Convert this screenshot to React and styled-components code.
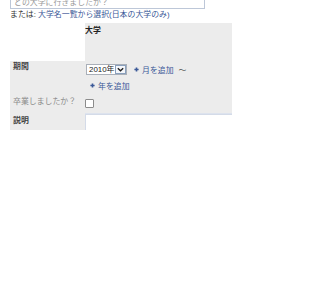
import React from 'react';
import styled, { createGlobalStyle } from 'styled-components';

const GlobalStyle = createGlobalStyle`
  html, body { margin:0; padding:0; background:#fff; }
  body {
    font-family:"Liberation Sans","Noto Sans CJK JP",sans-serif;
    font-size:7.9px;
    color:#333;
  }
`;

const Page = styled.div`
  padding-left:10px;
  width:222px;
`;

const SearchBox = styled.div`
  box-sizing:border-box;
  width:195px;
  height:19px;
  margin-top:-10px;
  border:1px solid #bdc7d8;
  padding:0 3px 1px;
  display:flex;
  align-items:flex-end;
  color:#999;
  line-height:9px;
`;

const Hint = styled.div`
  margin-top:1px;
  line-height:10px;
  white-space:nowrap;
`;

const Link = styled.a`
  color:#3b5998;
  text-decoration:none;
  cursor:pointer;
`;

const Form = styled.div`
  margin-top:3px;
  display:grid;
  grid-template-columns:75px 147px;
`;

const Label = styled.div`
  background:${p => (p.$blank ? '#fff' : '#ececec')};
  padding:${p => p.$top || 2}px 0 0 3px;
  line-height:10px;
  font-weight:${p => (p.$light ? 'normal' : 'bold')};
  color:${p => (p.$light ? '#8a8a8a' : '#444')};
  white-space:nowrap;
`;

const Field = styled.div`
  background:#ececec;
  box-sizing:border-box;
  height:${p => p.$h}px;
  padding:${p => p.$pad || '0'};
  border-bottom:${p => (p.$line ? '1px solid #dde3ee' : 'none')};
`;

const Heading = styled.div`
  font-weight:bold;
  color:#222;
  line-height:10px;
`;

const Line = styled.div`
  display:flex;
  align-items:center;
  height:${p => p.$h || 10}px;
  padding-left:${p => p.$indent || 0}px;
  margin-top:${p => p.$mt || 0}px;
`;

const Select = styled.div`
  box-sizing:border-box;
  width:41px;
  height:11px;
  border:1px solid #a9afb8;
  background:#fff;
  display:flex;
  align-items:center;
  justify-content:space-between;
  padding-left:2px;
  color:#222;
  line-height:9px;
`;

const Drop = styled.span`
  box-sizing:border-box;
  width:11px;
  height:9px;
  border:1px solid #8aa0bd;
  background:#f4f6fa;
  display:flex;
  align-items:center;
  justify-content:center;
`;

const AddLink = styled(Link)`
  display:inline-flex;
  align-items:center;
  gap:3px;
  white-space:nowrap;
  margin-left:${p => p.$ml || 0}px;
`;

const Tilde = styled.span`
  color:#555;
  margin-left:5px;
`;

const Check = styled.span`
  display:block;
  box-sizing:border-box;
  width:9px;
  height:9px;
  border:1px solid #8c8c8c;
  border-radius:1px;
  background:#fff;
`;

const TextBox = styled.div`
  height:16px;
  border-top:1px solid #d4dbe8;
  border-left:1px solid #d4dbe8;
  background:#fff;
  box-sizing:border-box;
`;

const DescLabel = styled(Label)`
  height:16px;
  box-sizing:border-box;
`;

function Plus() {
  return (
    <svg width="5" height="5" viewBox="0 0 5 5">
      <path d="M2.5 0.4V4.6M0.4 2.5H4.6" stroke="#3b5998" strokeWidth="1.6" />
    </svg>
  );
}

export default function App() {
  return (
    <Page>
      <GlobalStyle />
      <SearchBox>どの大学に行きましたか？</SearchBox>
      <Hint>
        または: <Link>大学名一覧から選択(日本の大学のみ)</Link>
      </Hint>
      <Form>
        <Label $blank />
        <Field $h={38} $pad="3px 0 0 0">
          <Heading>大学</Heading>
        </Field>

        <Label $top={1}>期間</Label>
        <Field $h={33} $pad="3px 0 0 1px">
          <Line $h={11}>
            <Select>
              2010年
              <Drop>
                <svg width="7" height="5" viewBox="0 0 7 5">
                  <path d="M0.8 1.2L3.5 3.8L6.2 1.2" stroke="#1a1a1a" strokeWidth="1.3" fill="none" />
                </svg>
              </Drop>
            </Select>
            <AddLink $ml={7}>
              <Plus />月を追加
            </AddLink>
            <Tilde>〜</Tilde>
          </Line>
          <Line $indent={4} $mt={5}>
            <AddLink>
              <Plus />年を追加
            </AddLink>
          </Line>
        </Field>

        <Label $top={3} $light>卒業しましたか？</Label>
        <Field $h={20} $pad="5px 0 0 0" $line>
          <Check />
        </Field>

        <DescLabel $top={0}>説明</DescLabel>
        <TextBox />
      </Form>
    </Page>
  );
}
